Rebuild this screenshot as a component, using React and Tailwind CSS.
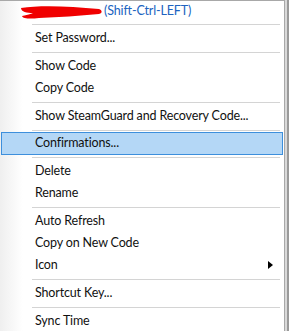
import React from "react";

const rows = [
  { type: "sep" },
  { type: "item", label: "Set Password..." },
  { type: "sep" },
  { type: "item", label: "Show Code" },
  { type: "item", label: "Copy Code" },
  { type: "sep" },
  { type: "item", label: "Show SteamGuard and Recovery Code..." },
  { type: "sep" },
  { type: "item", label: "Confirmations...", active: true },
  { type: "sep" },
  { type: "item", label: "Delete" },
  { type: "item", label: "Rename" },
  { type: "sep" },
  { type: "item", label: "Auto Refresh" },
  { type: "item", label: "Copy on New Code" },
  { type: "item", label: "Icon", submenu: true },
  { type: "sep" },
  { type: "item", label: "Shortcut Key..." },
  { type: "sep" },
  { type: "item", label: "Sync Time" },
];

function Separator() {
  return (
    <div className="h-[6px] flex items-center shrink-0">
      <div className="ml-[32px] w-[248px] h-px bg-[#d4d4d4]" />
    </div>
  );
}

function MenuItem({ label, active, submenu }) {
  if (active) {
    return (
      <div className="h-[23px] -my-px mx-px shrink-0 flex items-center pl-[33px] border border-[#3d8fdc] bg-[#b4d7f6] whitespace-nowrap">
        {label}
      </div>
    );
  }
  return (
    <div className="h-[22px] shrink-0 flex items-center pl-[35px] pr-[11px] whitespace-nowrap">
      <span className="flex-1">{label}</span>
      {submenu && (
        <svg width="5" height="8" viewBox="0 0 5 8">
          <path d="M0 0 L5 4 L0 8 Z" fill="#000" />
        </svg>
      )}
    </div>
  );
}

export default function App() {
  return (
    <div
      className="w-[289px] h-[331px] overflow-hidden flex bg-white text-[#111] text-[12.5px] tracking-[-0.15px]"
      style={{ fontFamily: 'Lato, "Open Sans", sans-serif' }}
    >
      <div className="w-[285px] h-full border-r border-t border-[#a8a8a8] bg-gradient-to-r from-[#efefef] via-white to-white via-[8%] flex flex-col">
        <div className="h-[20px] pt-px flex items-center shrink-0 whitespace-nowrap">
          <svg width="84" height="16" viewBox="0 0 84 16" className="ml-[19px] shrink-0">
            <path
              d="M2 4 C20 1 50 2 80 5 C83 6 84 9 80 10 C60 12 40 13 20 14 C12 15 4 15 3 12 C8 11 12 10 14 9 C8 9 2 8 2 4 Z"
              fill="#f00000"
            />
          </svg>
          <span className="text-[#2063c0] ml-[1px]">(Shift-Ctrl-LEFT)</span>
        </div>
        {rows.map((r, i) =>
          r.type === "sep" ? (
            <Separator key={i} />
          ) : (
            <MenuItem key={i} {...r} />
          )
        )}
      </div>
      <div className="flex-1 h-full flex">
        <div className="w-[2px] h-full bg-[#d9d9d9]" />
        <div className="w-[2px] h-full bg-[#9a9a9a]" />
      </div>
    </div>
  );
}
